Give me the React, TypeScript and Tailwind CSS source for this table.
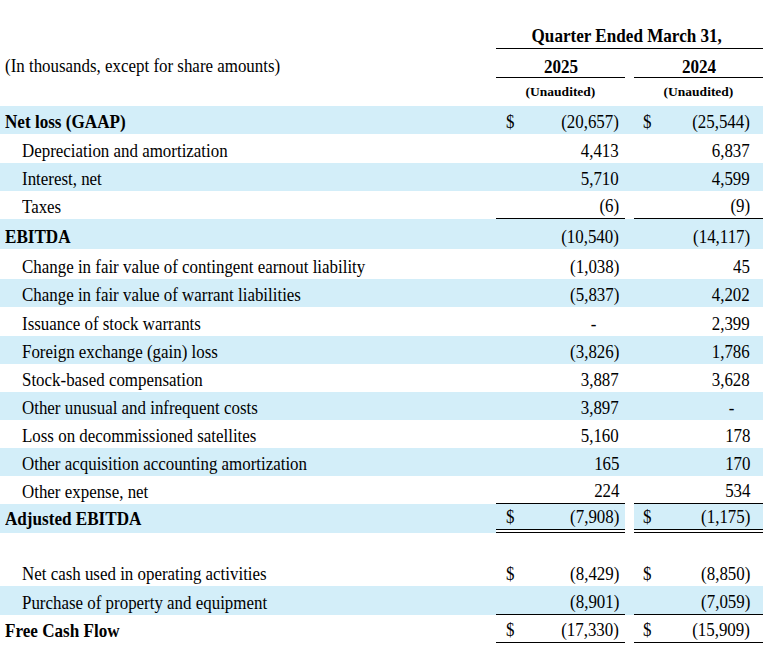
import React from "react";

type Row = {
  label?: string;
  bold?: boolean;
  blue?: boolean;
  h: string;
  c1?: string;
  c2?: string;
  d1?: boolean;
  d2?: boolean;
  line?: "single" | "double";
  gapWhite?: boolean;
  labelPb?: string;
};

const BLUE = "bg-[#d3eef9]";

const rows: Row[] = [
  { label: "Net loss (GAAP)", bold: true, blue: true, h: "h-[28px]", c1: "(20,657)", c2: "(25,544)", d1: true, d2: true },
  { label: "Depreciation and amortization", h: "h-[29px]", c1: "4,413", c2: "6,837" },
  { label: "Interest, net", blue: true, h: "h-[28px]", c1: "5,710", c2: "4,599" },
  { label: "Taxes", h: "h-[28px]", c1: "(6)", c2: "(9)", line: "single" },
  { label: "EBITDA", bold: true, blue: true, h: "h-[30px]", c1: "(10,540)", c2: "(14,117)" },
  { label: "Change in fair value of contingent earnout liability", h: "h-[30px]", c1: "(1,038)", c2: "45" },
  { label: "Change in fair value of warrant liabilities", blue: true, h: "h-[28px]", c1: "(5,837)", c2: "4,202" },
  { label: "Issuance of stock warrants", h: "h-[29px]", c1: "-", c2: "2,399" },
  { label: "Foreign exchange (gain) loss", blue: true, h: "h-[28px]", c1: "(3,826)", c2: "1,786" },
  { label: "Stock-based compensation", h: "h-[28px]", c1: "3,887", c2: "3,628" },
  { label: "Other unusual and infrequent costs", blue: true, h: "h-[28px]", c1: "3,897", c2: "-" },
  { label: "Loss on decommissioned satellites", h: "h-[28px]", c1: "5,160", c2: "178" },
  { label: "Other acquisition accounting amortization", blue: true, h: "h-[28px]", c1: "165", c2: "170" },
  { label: "Other expense, net", h: "h-[28px]", c1: "224", c2: "534", line: "single" },
  {
    label: "Adjusted EBITDA",
    bold: true,
    blue: true,
    h: "h-[29px]",
    c1: "(7,908)",
    c2: "(1,175)",
    d1: true,
    d2: true,
    line: "double",
    gapWhite: true,
    labelPb: "pb-[5px]",
  },
  { h: "h-[25px]" },
  { label: "Net cash used in operating activities", h: "h-[28px]", c1: "(8,429)", c2: "(8,850)", d1: true, d2: true },
  { label: "Purchase of property and equipment", blue: true, h: "h-[29px]", c1: "(8,901)", c2: "(7,059)", line: "single" },
  { label: "Free Cash Flow", bold: true, h: "h-[28px]", c1: "(17,330)", c2: "(15,909)", d1: true, d2: true, line: "single" },
];

function Txt({ children, className = "" }: { children: React.ReactNode; className?: string }) {
  return <span className={`inline-block whitespace-nowrap ${className}`}>{children}</span>;
}

function Cell({
  value,
  dollar,
  blue,
  line,
  first,
}: {
  value?: string;
  dollar?: boolean;
  blue?: boolean;
  line?: "single" | "double";
  first: boolean;
}) {
  const lineCls =
    line === "single"
      ? "border-b border-black"
      : line === "double"
        ? "border-b-4 border-double border-black bg-clip-padding"
        : "";
  const pad = first ? "pl-[10px] pr-[6px]" : "pl-[9px] pr-[13px]";
  const isDash = value === "-";
  const dashCls = first ? "mr-[23px]" : "mr-[16px]";
  return (
    <div className={`w-[129px] h-full flex items-end justify-between pb-[3px] box-border ${pad} ${blue ? BLUE : ""} ${lineCls}`}>
      {dollar ? <Txt className="scale-x-[0.89] origin-left">$</Txt> : <span />}
      {value ? <Txt className={`scale-x-[0.89] origin-right ${isDash ? dashCls : ""}`}>{value}</Txt> : null}
    </div>
  );
}

export default function App() {
  return (
    <div className="w-[763px] h-[645px] overflow-hidden bg-white text-black font-['Liberation_Serif',serif] text-[19px] leading-[19px]">
      {/* header row A */}
      <div className="flex h-[49px]">
        <div className="w-[496px]" />
        <div className="w-[267px] flex items-end justify-center pb-[3px] pr-[6px] border-b border-black box-border font-bold">
          <Txt className="scale-x-[0.9] origin-center">Quarter Ended March 31,</Txt>
        </div>
      </div>
      {/* header row B */}
      <div className="flex h-[29px]">
        <div className="w-[496px] flex items-end pl-[5px] pb-[3px]">
          <Txt className="scale-x-[0.89] origin-left">(In thousands, except for share amounts)</Txt>
        </div>
        <div className="w-[129px] flex items-end justify-center pb-[1px] border-b border-black box-border font-bold">
          <Txt className="scale-x-[0.9] origin-center">2025</Txt>
        </div>
        <div className="w-[9px]" />
        <div className="w-[129px] flex items-end justify-center pb-[1px] border-b border-black box-border font-bold">
          <Txt className="scale-x-[0.9] origin-center">2024</Txt>
        </div>
      </div>
      {/* header row C */}
      <div className="flex h-[28px] text-[13.5px] leading-[13.5px] font-bold">
        <div className="w-[496px]" />
        <div className="w-[129px] flex items-end justify-center pb-[8px]">
          <Txt>(Unaudited)</Txt>
        </div>
        <div className="w-[9px]" />
        <div className="w-[129px] flex items-end justify-center pb-[8px]">
          <Txt>(Unaudited)</Txt>
        </div>
      </div>
      {rows.map((r, i) => (
        <div key={i} className={`flex ${r.h}`}>
          <div
            className={`w-[496px] flex items-end ${r.labelPb ?? "pb-[3px]"} ${r.bold ? "pl-[5px] font-bold" : "pl-[22px]"} ${r.blue ? BLUE : ""}`}
          >
            {r.label ? (
              <Txt className={r.bold ? "scale-x-[0.9] origin-left" : "scale-x-[0.89] origin-left"}>{r.label}</Txt>
            ) : null}
          </div>
          {r.label ? (
            <>
              <Cell value={r.c1} dollar={r.d1} blue={r.blue} line={r.line} first />
              <div className={`w-[9px] ${r.blue && !r.gapWhite ? BLUE : ""}`} />
              <Cell value={r.c2} dollar={r.d2} blue={r.blue} line={r.line} first={false} />
            </>
          ) : null}
        </div>
      ))}
    </div>
  );
}
